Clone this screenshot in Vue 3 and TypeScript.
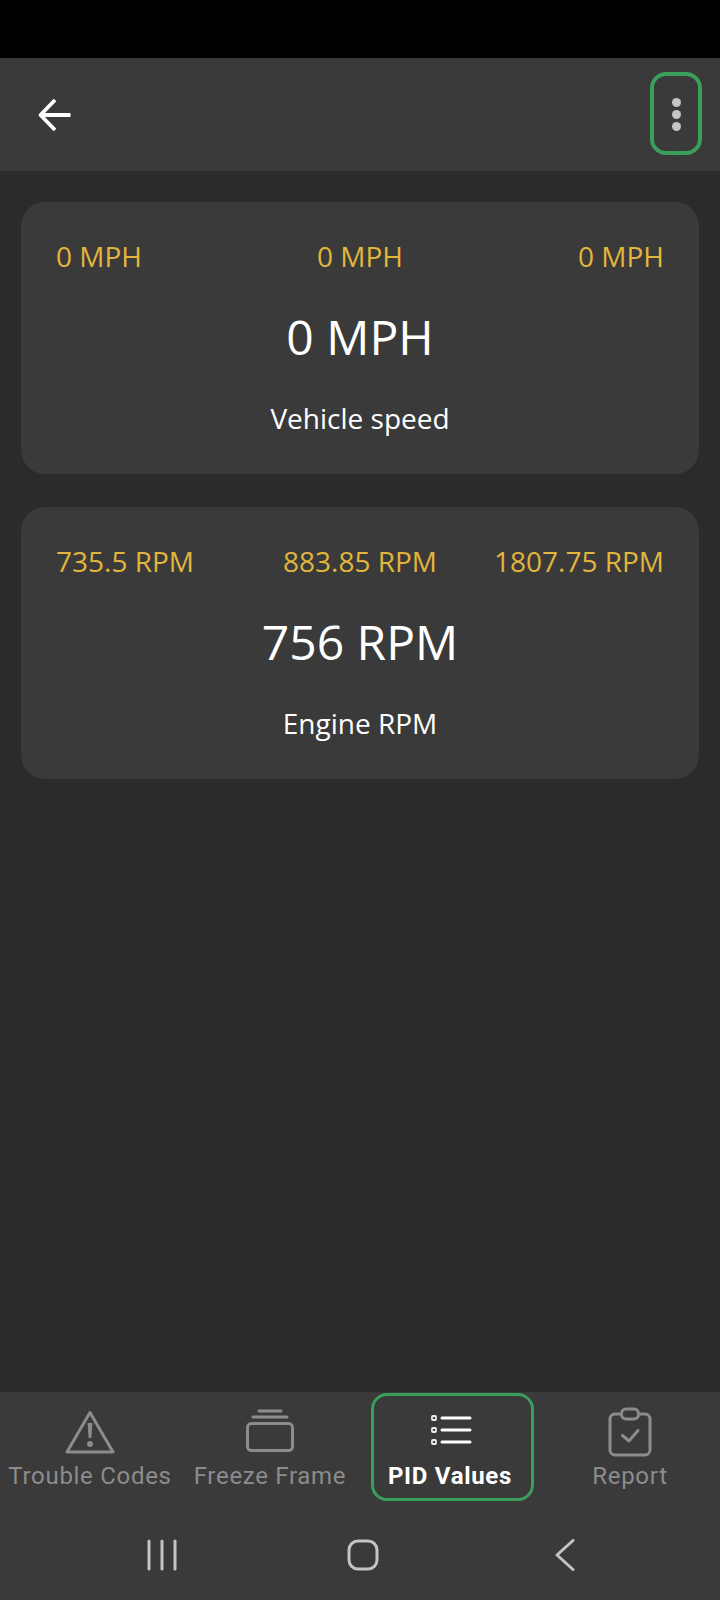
<script setup lang="ts">
type Reading = { low: string; mid: string; high: string; value: string; label: string };

const readings: Reading[] = [
  { low: "0 MPH", mid: "0 MPH", high: "0 MPH", value: "0 MPH", label: "Vehicle speed" },
  { low: "735.5 RPM", mid: "883.85 RPM", high: "1807.75 RPM", value: "756 RPM", label: "Engine RPM" },
];
</script>

<template>
  <div class="screen">
    <div class="status"></div>

    <header class="topbar">
      <svg class="back" width="36" height="36" viewBox="0 0 36 36" fill="none">
        <path d="M33.5 18H4M18 3 3.5 18 18 33" stroke="#fff" stroke-width="3.8" stroke-linejoin="round" />
      </svg>
      <button class="more">
        <i></i><i></i><i></i>
      </button>
    </header>

    <main class="content">
      <section v-for="r in readings" :key="r.label" class="card">
        <div class="range">
          <span>{{ r.low }}</span>
          <span>{{ r.mid }}</span>
          <span class="high">{{ r.high }}</span>
        </div>
        <div class="value">{{ r.value }}</div>
        <div class="label">{{ r.label }}</div>
      </section>
    </main>

    <nav class="tabs">
      <div class="tab">
        <svg width="60" height="52" viewBox="0 0 60 52" fill="none">
          <path d="M30 7.5 7 47h46L30 7.5Z" stroke="#8c8c8c" stroke-width="3" stroke-linejoin="round" />
          <path d="M27.6 18h4.8l-1 15h-2.8l-1-15Z" fill="#8c8c8c" />
          <circle cx="30" cy="39" r="3" fill="#8c8c8c" />
        </svg>
        <span>Trouble Codes</span>
      </div>
      <div class="tab">
        <svg width="60" height="52" viewBox="0 0 60 52" fill="none">
          <rect x="7.5" y="18.5" width="45" height="27" rx="4" stroke="#8c8c8c" stroke-width="3" />
          <path d="M13 12h34M19 6h22" stroke="#8c8c8c" stroke-width="3" stroke-linecap="round" />
        </svg>
        <span>Freeze Frame</span>
      </div>
      <div class="tab active">
        <svg width="60" height="52" viewBox="0 0 60 52" fill="none">
          <rect x="12" y="11" width="4" height="4" rx="1" stroke="#eee" stroke-width="1.8" />
          <rect x="12" y="23" width="4" height="4" rx="1" stroke="#eee" stroke-width="1.8" />
          <rect x="12" y="35" width="4" height="4" rx="1" stroke="#eee" stroke-width="1.8" />
          <path d="M22 13h28M22 25h28M22 37h28" stroke="#fff" stroke-width="3" stroke-linecap="round" />
        </svg>
        <span>PID Values</span>
      </div>
      <div class="tab">
        <svg width="60" height="52" viewBox="0 0 60 52" fill="none">
          <path d="M20 9h-5a5 5 0 0 0-5 5v31a5 5 0 0 0 5 5h30a5 5 0 0 0 5-5V14a5 5 0 0 0-5-5h-5" stroke="#8c8c8c" stroke-width="3" />
          <rect x="21.5" y="4" width="17" height="10" rx="4.5" stroke="#8c8c8c" stroke-width="3" />
          <path d="M22.5 30.5 29 36l9-10.5" stroke="#8c8c8c" stroke-width="3" stroke-linecap="round" stroke-linejoin="round" />
        </svg>
        <span>Report</span>
      </div>
    </nav>

    <div class="sysnav">
      <div class="sys">
        <svg width="32" height="32" viewBox="0 0 32 32" fill="none">
          <path d="M3 2v28M16 2v28M29 2v28" stroke="#c4c4c4" stroke-width="3" stroke-linecap="round" />
        </svg>
      </div>
      <div class="sys">
        <svg width="32" height="32" viewBox="0 0 32 32" fill="none">
          <rect x="2" y="2" width="28" height="28" rx="9" stroke="#c4c4c4" stroke-width="3" />
        </svg>
      </div>
      <div class="sys">
        <svg width="32" height="32" viewBox="0 0 32 32" fill="none">
          <path d="M25 1.5 9 16l16 14.5" stroke="#c4c4c4" stroke-width="3" stroke-linecap="round" stroke-linejoin="round" />
        </svg>
      </div>
    </div>
  </div>
</template>

<style>
html,
body {
  background: #2b2b2b;
}
</style>

<style scoped>
.screen {
  display: flex;
  flex-direction: column;
  width: 720px;
  height: 1600px;
  background: #2b2b2b;
  font-family: "Open Sans", sans-serif;
}

.status {
  height: 58px;
  background: #000;
}

.topbar {
  display: flex;
  align-items: center;
  justify-content: space-between;
  height: 113px;
  padding: 0 18px 0 37px;
  box-sizing: border-box;
  background: #3a3a3a;
}

.more {
  display: flex;
  flex-direction: column;
  align-items: center;
  justify-content: center;
  gap: 3px;
  width: 52px;
  height: 83px;
  margin-bottom: 2px;
  padding: 2px 0 0;
  box-sizing: border-box;
  background: none;
  border: 4px solid #3a9f5c;
  border-radius: 16px;
}

.more i {
  width: 9px;
  height: 9px;
  border-radius: 50%;
  background: #c4c4c4;
}

.content {
  flex: 1;
  display: flex;
  flex-direction: column;
  gap: 33px;
  padding: 31px 21px 0;
}

.card {
  height: 272px;
  padding: 0 35px;
  box-sizing: border-box;
  background: #3a3a3a;
  border-radius: 24px;
  text-align: center;
}

.range {
  display: grid;
  grid-template-columns: 1fr auto 1fr;
  padding-top: 36px;
  font-size: 28px;
  line-height: 36px;
  color: #e2b53c;
}

.range span {
  text-align: left;
}

.range .high {
  text-align: right;
}

.value {
  margin-top: 30px;
  font-size: 48px;
  line-height: 66px;
  color: #fff;
}

.label {
  margin-top: 30px;
  font-size: 28px;
  line-height: 36px;
  color: #fff;
}

.tabs {
  display: grid;
  grid-template-columns: repeat(4, 180px);
  height: 111px;
  background: #3a3a3a;
  font-family: Roboto, sans-serif;
}

.tab {
  position: relative;
  display: flex;
  flex-direction: column;
  align-items: center;
  padding-top: 13px;
  font-size: 24px;
  line-height: 28px;
  letter-spacing: 0.7px;
  color: #8c8c8c;
  white-space: nowrap;
}

.tab span {
  margin-top: 5px;
}

.tab.active {
  color: #fff;
  font-weight: 700;
}

/* green focus ring sits over the tab, slightly off its centre */
.tab.active::after {
  content: "";
  position: absolute;
  top: 1px;
  left: 11px;
  width: 163px;
  height: 108px;
  box-sizing: border-box;
  border: 3.5px solid #3a9f5c;
  border-radius: 16px;
}

.sysnav {
  height: 97px;
  display: flex;
  justify-content: center;
  padding: 36px 0 0 5px;
  box-sizing: border-box;
  background: #3a3a3a;
}

.sys {
  display: flex;
  justify-content: center;
  width: 201px;
}
</style>
